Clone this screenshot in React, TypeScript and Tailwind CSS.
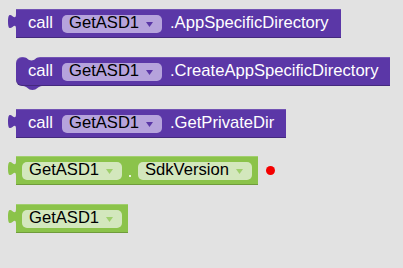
import React from 'react';

const PURPLE = 'bg-[#5b37a7]';
const GREEN = 'bg-[#8bc34a]';

const OutputTab = ({ fill }: { fill: string }) => (
	<svg className="absolute left-[-9px] top-[5px]" width="10" height="15" viewBox="0 0 10 15">
		<path d="M10,0 H9 c0,10 -8,-8 -8,7.5 s8,-2.5 8,7.5 H10 z" fill={fill} />
	</svg>
);

const Dropdown = ({ label, tone, wide }: { label: string; tone: 'purple' | 'green'; wide?: boolean }) => (
	<div
		className={`flex items-center justify-between h-[18px] rounded-[5px] pl-[7px] pr-[9px] text-black ${
			wide ? 'w-[114px]' : 'w-[100px]'
		} ${tone === 'purple' ? 'bg-[#b6a3dc]' : 'bg-[#d3e7bd]'}`}
	>
		<span className="leading-none">{label}</span>
		<svg width="7" height="5" viewBox="0 0 7 5" className="mt-[1px]">
			<path d="M0,0 H7 L3.5,5 z" fill={tone === 'purple' ? '#5b37a7' : '#9fcf6c'} />
		</svg>
	</div>
);

const CallBlock = ({ method, statement }: { method: string; statement?: boolean }) => (
	<div
		className={`relative flex items-center h-[29px] ${PURPLE} pl-3 pr-3 text-white shadow-[inset_0_1px_0_rgba(255,255,255,0.15),inset_0_-1px_0_rgba(0,0,0,0.25)] ${
			statement ? 'rounded-l-[6px]' : ''
		}`}
	>
		{statement ? (
			<>
				<svg className="absolute left-[7px] top-0" width="17" height="4" viewBox="0 0 17 4">
					<path d="M0,0 C4,0 5,3.5 8.5,3.5 C12,3.5 13,0 17,0 Z" fill="#e2e2e2" />
				</svg>
				<svg className="absolute left-[7px] top-full" width="19" height="4" viewBox="0 0 19 4">
					<path d="M0,0 C4,0 5,4 9.5,4 C14,4 15,0 19,0 Z" fill="#5b37a7" />
				</svg>
			</>
		) : (
			<OutputTab fill="#5b37a7" />
		)}
		<span className="leading-none w-[34px]">call</span>
		<Dropdown label="GetASD1" tone="purple" />
		<span className="leading-none ml-2">{method}</span>
	</div>
);

const GetterBlock = ({ property }: { property?: string }) => (
	<div
		className={`relative flex items-center h-[29px] ${GREEN} px-[6px] shadow-[inset_0_1px_0_rgba(255,255,255,0.2),inset_0_-1px_0_rgba(0,0,0,0.2)]`}
	>
		<OutputTab fill="#8bc34a" />
		<Dropdown label="GetASD1" tone="green" />
		{property && (
			<>
				<span className="w-4 flex justify-center">
					<span className="w-[2px] h-[2px] bg-white/80 mt-[10px]" />
				</span>
				<Dropdown label={property} tone="green" wide />
			</>
		)}
	</div>
);

export default function App() {
	return (
		<div
			className="w-[403px] h-[268px] bg-[#e2e2e2] flex flex-col items-start pl-4 pt-[9px] text-[16.6px]"
			style={{ fontFamily: '"Liberation Sans", Arial, sans-serif' }}
		>
			<CallBlock method=".AppSpecificDirectory" />
			<div className="mt-[19px]">
				<CallBlock method=".CreateAppSpecificDirectory" statement />
			</div>
			<div className="mt-[23px]">
				<CallBlock method=".GetPrivateDir" />
			</div>
			<div className="mt-[18px] flex items-center gap-[8px]">
				<GetterBlock property="SdkVersion" />
				<span className="w-[9px] h-[9px] rounded-full bg-[#f40000]" />
			</div>
			<div className="mt-[19px]">
				<GetterBlock />
			</div>
		</div>
	);
}
